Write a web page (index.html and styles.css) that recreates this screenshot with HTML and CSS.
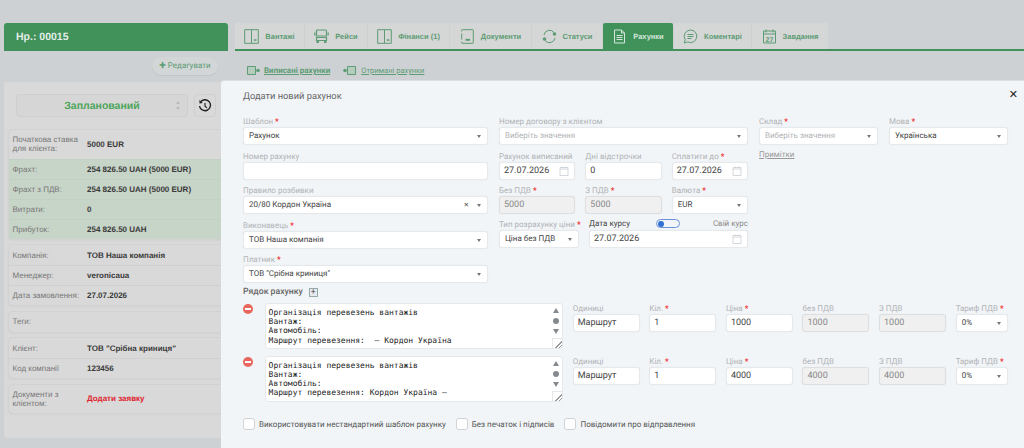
FILE: index.html
```html
<!DOCTYPE html>
<html lang="uk">
<head>
<meta charset="UTF-8">
<title>Рахунки</title>
<link rel="stylesheet" href="styles.css">
</head>
<body>
<svg width="0" height="0" class="defs">
  <symbol id="i-split" viewBox="0 0 15 15"><path d="M.7.700h13.600v13.600H.7zM7.500.700v13.600" fill="none" stroke="currentColor"/><path d="M9.800 10.300h2.700v1.500H9.800z" fill="currentColor"/></symbol>
  <symbol id="i-doc" viewBox="0 0 15 15"><path d="M1.700 2.500V1.200q0-.5.500-.5h10.600q.5 0 .5.500v12.600q0 .5-.5.500H2.200q-.5 0-.5-.5v-1.300M1.700 4.500v6" fill="none" stroke="currentColor"/><path d="M5.500 9.800h4.500v2H5.500z" fill="currentColor"/></symbol>
  <symbol id="i-date" viewBox="0 0 10 10"><path d="M1 1.500h8v8H1zM1 3h8M3 .5v1M7 .5v1" fill="none" stroke="#c9ced3" stroke-width=".8"/></symbol>
</svg>

<aside class="side">
  <div class="side-head">Нр.: 00015</div>
  <div class="side-tools"><span class="edit-btn"><b>+</b> Редагувати</span></div>
  <div class="side-card">
    <div class="status-row">
      <div class="status">Запланований<i class="updown"></i></div>
      <div class="hist">
        <svg width="14" height="14" viewBox="0 0 14 14"><path d="M2.600 2.800A5.500 5.500 0 1 1 1.500 7" fill="none" stroke="#222" stroke-width="1.400"/><path d="M1.300 1l.2 3.400 3.300-.5z" fill="#222"/><path d="M7 4v3.300l2 1.600" fill="none" stroke="#222" stroke-width="1.200"/></svg>
      </div>
    </div>
    <div class="info">
      <div class="info-row tall"><span>Початкова ставка для клієнта:</span><b>5000 EUR</b></div>
      <div class="info-row gr"><span>Фрахт:</span><b>254 826.50 UAH (5000 EUR)</b></div>
      <div class="info-row gr"><span>Фрахт з ПДВ:</span><b>254 826.50 UAH (5000 EUR)</b></div>
      <div class="info-row gr"><span>Витрати:</span><b>0</b></div>
      <div class="info-row gr"><span>Прибуток:</span><b>254 826.50 UAH</b></div>
    </div>
    <div class="info">
      <div class="info-row"><span>Компанія:</span><b>ТОВ Наша компанія</b></div>
      <div class="info-row"><span>Менеджер:</span><b>veronicaua</b></div>
      <div class="info-row"><span>Дата замовлення:</span><b>27.07.2026</b></div>
    </div>
    <div class="info">
      <div class="info-row"><span>Теги:</span></div>
    </div>
    <div class="info">
      <div class="info-row"><span>Клієнт:</span><b>ТОВ "Срібна криниця"</b></div>
      <div class="info-row"><span>Код компанії</span><b>123456</b></div>
    </div>
    <div class="info">
      <div class="info-row tall"><span>Документи з клієнтом:</span><b class="red">Додати заявку</b></div>
    </div>
  </div>
</aside>

<main class="content">
  <nav class="tabs">
    <a class="tab w-a"><svg width="15" height="15"><use href="#i-split"/></svg>Вантажі</a>
    <a class="tab w-b"><svg width="15" height="15" viewBox="0 0 15 15"><path d="M3.500 1h8q1 0 1 1v5h-10V2q0-1 1-1zM.8 3.500v3M14.200 3.500v3M2.500 8.500h10v3h-10z" fill="none" stroke="currentColor" stroke-width="1.200"/><path d="M2.500 12h2.500v2H2.500zM10 12h2.500v2H10z" fill="currentColor"/></svg>Рейси</a>
    <a class="tab w-c"><svg width="15" height="15"><use href="#i-split"/></svg>Фінанси (1)</a>
    <a class="tab w-d"><svg width="15" height="15"><use href="#i-doc"/></svg>Документи</a>
    <a class="tab w-e"><svg width="15" height="15" viewBox="0 0 15 15"><path d="M2 6a5.600 5.600 0 0 1 10-2.500M13 9a5.600 5.600 0 0 1-10 2.500" fill="none" stroke="currentColor"/><circle cx="12.500" cy="5" r="1.800" fill="currentColor"/><circle cx="2.500" cy="10" r="1.800" fill="currentColor"/></svg>Статуси</a>
    <a class="tab w-f active"><svg width="15" height="15" viewBox="0 0 15 15"><path d="M2.500 1h7l3 3v10h-10zM9.500 1v3h3M4.500 6.500h6M4.500 8.500h6M4.500 10.500h6" fill="none" stroke="currentColor"/></svg>Рахунки</a>
    <a class="tab w-g"><svg width="15" height="15" viewBox="0 0 15 15"><path d="M7.500 1a6.300 6.300 0 1 1-2.900 11.900L1.300 14l.9-3.300A6.300 6.300 0 0 1 7.500 1zM4.500 5.500h6M4.500 7.500h6M4.500 9.500h4" fill="none" stroke="currentColor"/></svg>Коментарі</a>
    <a class="tab w-h"><svg width="15" height="15" viewBox="0 0 15 15"><path d="M1.500 2h12v12h-12zM1.500 5h12M4 .5v3M11 .5v3" fill="none" stroke="currentColor"/><text x="7.500" y="12.500" font-size="7" text-anchor="middle" fill="currentColor" font-family="Liberation Sans">27</text></svg>Завдання</a>
  </nav>
  <div class="subtabs">
    <a class="sub"><svg width="13" height="9" viewBox="0 0 13 9"><path d="M.5.500h8v8h-8z" fill="#b5cdbd" stroke="currentColor"/><circle cx="11" cy="4.500" r="1.800" fill="currentColor"/></svg><b>Виписані рахунки</b></a>
    <a class="sub next"><svg width="13" height="9" viewBox="0 0 13 9"><path d="M4.500.500h8v8h-8z" fill="#b5cdbd" stroke="currentColor"/><circle cx="2" cy="4.500" r="1.800" fill="currentColor"/></svg>Отримані рахунки</a>
  </div>
</main>

<section class="modal">
  <h2 class="modal-title">Додати новий рахунок</h2>
  <span class="close">✕</span>

  <div class="form-top">
    <div class="col-a">
      <div class="fld"><label>Шаблон <i>*</i></label><div class="ctl sel">Рахунок</div></div>
      <div class="fld"><label>Номер рахунку</label><div class="ctl"></div></div>
      <div class="fld"><label>Правило розбивки</label><div class="ctl sel clr">20/80 Кордон Україна<em>✕</em></div></div>
      <div class="fld"><label>Виконавець <i>*</i></label><div class="ctl sel">ТОВ Наша компанія</div></div>
      <div class="fld"><label>Платник <i>*</i></label><div class="ctl sel">ТОВ "Срібна криниця"</div></div>
    </div>
    <div class="col-b">
      <div class="fld"><label>Номер договору з клієнтом</label><div class="ctl sel ph">Виберіть значення</div></div>
      <div class="tri">
        <div class="fld"><label>Рахунок виписаний</label><div class="ctl dt">27.07.2026<svg width="10" height="10"><use href="#i-date"/></svg></div></div>
        <div class="fld"><label>Дні відстрочки</label><div class="ctl">0</div></div>
        <div class="fld"><label>Сплатити до <i>*</i></label><div class="ctl dt">27.07.2026<svg width="10" height="10"><use href="#i-date"/></svg></div></div>
      </div>
      <div class="tri">
        <div class="fld"><label>Без ПДВ <i>*</i></label><div class="ctl off">5000</div></div>
        <div class="fld"><label>З ПДВ <i>*</i></label><div class="ctl off">5000</div></div>
        <div class="fld"><label>Валюта <i>*</i></label><div class="ctl sel">EUR</div></div>
      </div>
      <div class="duo">
        <div class="fld"><label>Тип розрахунку ціни <i>*</i></label><div class="ctl sel">Ціна без ПДВ</div></div>
        <div class="fld">
          <label class="rate"><span class="dark">Дата курсу</span><u class="toggle"></u><span class="own">Свій курс</span></label>
          <div class="ctl dt">27.07.2026<svg width="10" height="10"><use href="#i-date"/></svg></div>
        </div>
      </div>
    </div>
    <div class="col-c">
      <div class="fld"><label>Склад <i>*</i></label><div class="ctl sel ph">Виберіть значення</div></div>
      <a class="notes">Примітки</a>
    </div>
    <div class="col-d">
      <div class="fld"><label>Мова <i>*</i></label><div class="ctl sel">Українська</div></div>
    </div>
  </div>

  <div class="lines-head">Рядок рахунку <span class="plus">+</span></div>

  <div class="line">
    <span class="minus"></span>
    <div class="memo">
      <pre>Організація перевезень вантажів
Вантаж:
Автомобіль:
Маршрут перевезення:  – Кордон Україна</pre>
      <div class="scroll"><s class="up"></s><s class="dot"></s><s class="down"></s></div>
      <span class="grip"></span>
    </div>
    <div class="fld"><label>Одиниці</label><div class="ctl">Маршрут</div></div>
    <div class="fld"><label>Кіл. <i>*</i></label><div class="ctl">1</div></div>
    <div class="fld"><label>Ціна <i>*</i></label><div class="ctl">1000</div></div>
    <div class="fld"><label>без ПДВ</label><div class="ctl off">1000</div></div>
    <div class="fld"><label>З ПДВ</label><div class="ctl off">1000</div></div>
    <div class="fld"><label>Тариф ПДВ <i>*</i></label><div class="ctl sel">0%</div></div>
  </div>
  <div class="line">
    <span class="minus"></span>
    <div class="memo">
      <pre>Організація перевезень вантажів
Вантаж:
Автомобіль:
Маршрут перевезення: Кордон Україна –</pre>
      <div class="scroll"><s class="up"></s><s class="dot"></s><s class="down"></s></div>
      <span class="grip"></span>
    </div>
    <div class="fld"><label>Одиниці</label><div class="ctl">Маршрут</div></div>
    <div class="fld"><label>Кіл. <i>*</i></label><div class="ctl">1</div></div>
    <div class="fld"><label>Ціна <i>*</i></label><div class="ctl">4000</div></div>
    <div class="fld"><label>без ПДВ</label><div class="ctl off">4000</div></div>
    <div class="fld"><label>З ПДВ</label><div class="ctl off">4000</div></div>
    <div class="fld"><label>Тариф ПДВ <i>*</i></label><div class="ctl sel">0%</div></div>
  </div>

  <div class="checks">
    <span class="chk"><u></u>Використовувати нестандартний шаблон рахунку</span>
    <span class="chk"><u></u>Без печаток і підписів</span>
    <span class="chk"><u></u>Повідомити про відправлення</span>
  </div>
</section>
</body>
</html>
```

FILE: styles.css
```css
html,body{margin:0;height:448px;overflow:hidden}
body{background:#cdd1d4;font-family:"Roboto","Liberation Sans",sans-serif;color:#333;display:flex;align-items:flex-start;padding:23px 0 0 4px;box-sizing:border-box;position:relative;text-rendering:geometricPrecision}
.defs{position:absolute}

.side{width:224px;flex:none}
.side-head{height:28px;background:#40925a;color:#e4eee7;font:bold 10.500px/28px "Liberation Sans",sans-serif;padding-left:12px;border-radius:3px 3px 0 0}
.side-tools{height:31px;display:flex;justify-content:flex-end;padding:6px 10px 0 0;box-sizing:border-box}
.edit-btn{height:18px;width:66px;background:#d3d6d7;border-radius:9px;font-size:8px;line-height:18px;color:#5d9c74;text-align:center;box-shadow:0 1px 1px #c1c4c6;white-space:nowrap}
.edit-btn b{font-size:12px;line-height:12px;vertical-align:-1px}
.side-card{background:#d9d9d9;height:356px;padding:12px 0 0 5px;box-sizing:border-box;border-radius:0 0 4px 4px}
.status-row{display:flex;gap:6px;padding-left:7px;margin-bottom:13px}
.status{width:172px;height:23px;background:#d6d6d6;border:1px solid #cfcfcf;border-radius:4px;box-sizing:border-box;color:#4aa45a;font:bold 10.500px/22px "Liberation Sans",sans-serif;text-align:center;position:relative}
.updown{position:absolute;right:6px;top:6px;width:5px;height:9px}
.updown:before,.updown:after{content:"";position:absolute;left:0;border:2.500px solid transparent}
.updown:before{top:0;border-bottom:3px solid #bbb;border-top:0}
.updown:after{bottom:0;border-top:3px solid #bbb;border-bottom:0}
.hist{width:22px;height:23px;border:1px solid #cfcfcf;border-radius:4px;box-sizing:border-box;display:flex;align-items:center;justify-content:center}
.info{border-radius:4px 0 0 4px;margin-bottom:6.500px;box-shadow:0 0 0 1px #d2d2d2,0 1px 2px #c6c6c6}
.info-row{height:20px;display:flex;align-items:center;font-size:8px;line-height:9px;color:#777;padding-left:3.500px;border-top:1px solid #d0d0d0;box-sizing:border-box}
.info-row:first-child{border-top:0}
.info-row span{width:74.500px;flex:none;font-family:"Liberation Sans",sans-serif}
.info-row b{color:#3a3a3a;font:bold 8px "Liberation Sans",sans-serif}
.info-row b.red{color:#e02230}
.tall{height:28.500px}
.gr{background:#c7d4c8;border-top-color:#c2cfc3}

.content{flex:none;margin-left:7px;width:789px}
.tabs{display:flex;gap:1px;border-bottom:2.500px solid #40925a;height:26px}
.tab{display:flex;align-items:center;justify-content:center;gap:6px;height:26px;background:#d5d6d6;border-radius:2px 2px 0 0;color:#5d9c74;font:bold 7.500px "Liberation Sans",sans-serif;box-sizing:border-box}
.tab svg{flex:none}
.tab.active{background:#40925a;color:#d6e6db}
.w-a{width:69px}.w-b{width:62px}.w-c{width:81px}.w-d{width:81px}.w-e{width:70px}.w-f{width:70px}.w-g{width:77px}.w-h{width:76px}
.subtabs{display:flex;gap:13px;padding:15px 0 0 12px;font-size:8px;color:#5d9c74}
.sub{display:flex;align-items:center;gap:4px;text-decoration:underline}
.sub svg{flex:none}
.sub.next{gap:5px;font-size:7.500px}

.modal{position:absolute;left:221px;top:81px;width:803px;height:367px;background:#f2f5f8;border-radius:3px 0 0 0;box-shadow:0 -1px 0 #dde0e2;padding:10px 16px 0 22px;box-sizing:border-box}
.modal-title{margin:0 0 14px;font-size:9.300px;line-height:11px;font-weight:400;color:#666}
.close{position:absolute;right:6px;top:8px;font:bold 11px/12px "DejaVu Sans",sans-serif;color:#222}

label{display:block;height:9px;font-size:8px;line-height:11px;color:#b0b3b6;margin-bottom:2px;white-space:nowrap}
label i{color:#ee2222;font-style:normal;font-weight:bold}
.fld{min-width:0}
.ctl{height:18px;background:#fff;border:1px solid #e6e9ec;border-radius:3px;box-sizing:border-box;font-size:9px;line-height:16px;color:#444;padding:0 4px;position:relative;white-space:nowrap;box-shadow:0 0 1px #dfe2e5}
.sel{font-size:8px;padding:0 5px}
.sel:after{content:"";position:absolute;right:6px;top:7px;border:2.500px solid transparent;border-top:3px solid #777;border-bottom:0}
.ph{color:#b0b3b6}
.clr em{position:absolute;right:18px;top:0;font:bold 6.500px/16px "DejaVu Sans",sans-serif;color:#444}
.off{background:#f0f0f0;border-color:#dedede;color:#888}
.dt svg{position:absolute;right:5px;top:3px}

.form-top{display:grid;grid-template-columns:245px 249px 119px 119px;column-gap:11px}
.col-a,.col-b{display:flex;flex-direction:column;gap:5.500px}
.tri{display:grid;grid-template-columns:repeat(3,1fr);column-gap:10px}
.duo{display:grid;grid-template-columns:80px 159px;column-gap:10px;margin-top:-.500px}
.rate{display:flex;justify-content:space-between;align-items:center}
.dark{color:#444}
.own{color:#888}
.toggle{width:24px;height:9px;border:1px solid #6b94d8;border-radius:5px;box-sizing:border-box;position:relative;margin-right:6px}
.toggle:before{content:"";position:absolute;left:1px;top:.5px;width:6px;height:6px;border-radius:50%;background:#2f6fd6}
.notes{display:block;margin-top:5px;font-size:8px;color:#999;text-decoration:underline}

.lines-head{font-size:8.700px;font-weight:500;line-height:11px;color:#666;margin:3.500px 0 5.500px;display:flex;align-items:center;gap:6px}
.plus{width:9px;height:9px;border:1px solid #9aa;background:#e6eaee;box-sizing:border-box;font-size:8px;line-height:6px;text-align:center}
.line{display:grid;grid-template-columns:12px 298.500px repeat(5,67px) 52px;column-gap:9.600px;margin-bottom:6.500px;height:46px}
.minus{width:10px;height:10px;border-radius:50%;background:#e8675c;margin-top:1px;position:relative}
.minus:after{content:"";position:absolute;left:2px;top:4px;width:6px;height:2px;background:#fff}
.memo{background:#fff;border:1px solid #e6e9ec;border-radius:3px;box-sizing:border-box;position:relative;height:46px}
.memo pre{margin:0;padding:4px 0 0 3px;font:8px/9.200px "DejaVu Sans Mono",monospace;color:#222}
.scroll{position:absolute;right:1px;top:1px;width:10px;display:flex;flex-direction:column;align-items:center;gap:5px;padding-top:3px;box-sizing:border-box}
.scroll s{display:block}
.up{border:3.500px solid transparent;border-bottom:5px solid #858a8f;border-top:0}
.dot{width:6px;height:6px;border-radius:50%;background:#858a8f}
.down{border:3.500px solid transparent;border-top:5px solid #858a8f;border-bottom:0}
.grip{position:absolute;right:0;bottom:0;width:10px;height:10px;border-left:1px solid #e6e9ec;border-top:1px solid #e6e9ec;box-sizing:border-box;background:linear-gradient(135deg,transparent 60%,#999 60%,#999 68%,transparent 68%,transparent 78%,#999 78%,#999 86%,transparent 86%)}

.checks{display:flex;gap:10px;margin-top:16px;font-size:8px;line-height:13px;color:#555}
.chk{display:flex;align-items:center;gap:4px}
.chk u{width:12px;height:12px;background:#fff;border:1px solid #d0d3d6;border-radius:3px;box-sizing:border-box}
```
